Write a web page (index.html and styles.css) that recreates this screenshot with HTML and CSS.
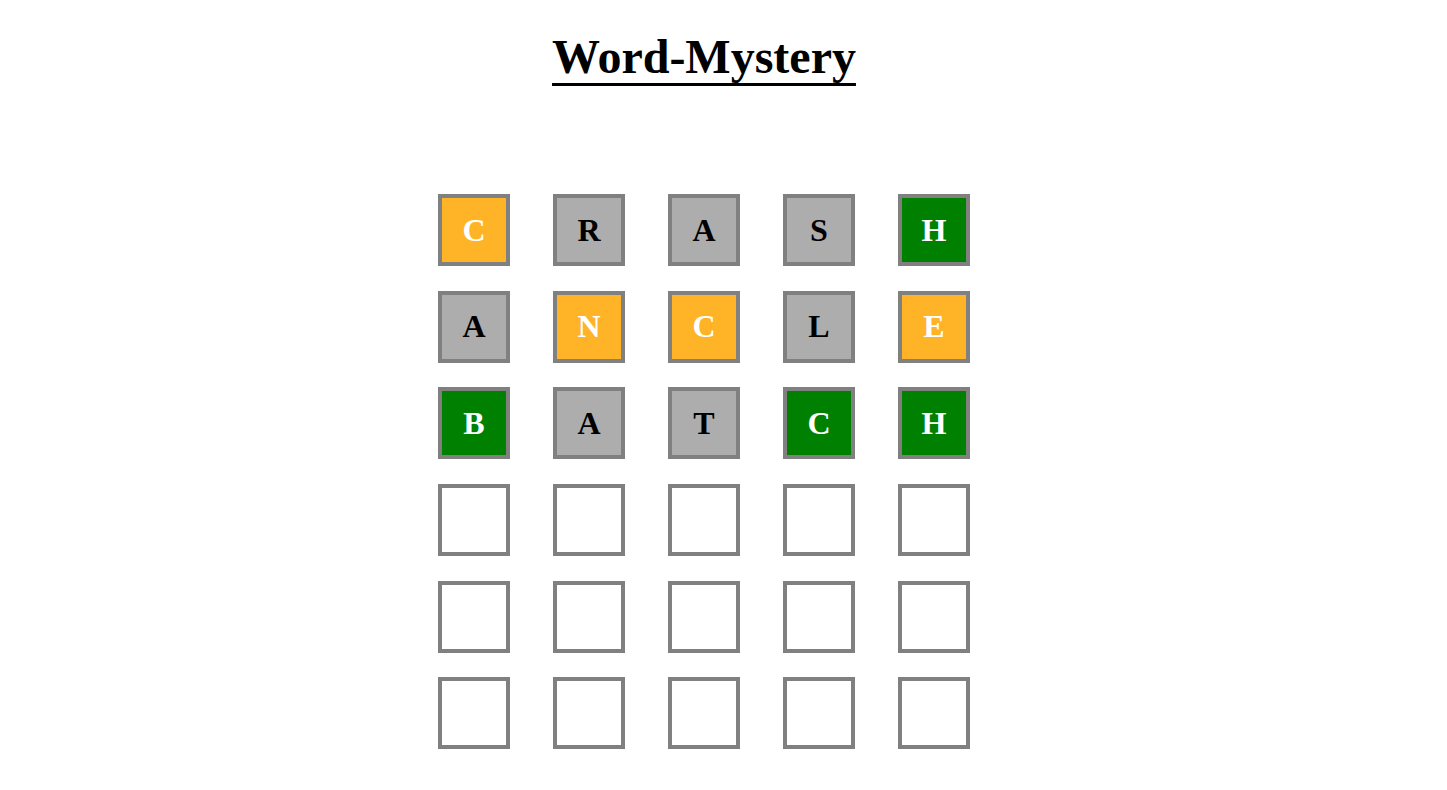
FILE: index.html
```html
<!DOCTYPE html>
<html>
<head>
<meta charset="utf-8">
<title>Word-Mystery</title>
<link rel="stylesheet" href="styles.css">
</head>
<body>
<div class="page">
  <h1 class="title">Word-Mystery</h1>
  <div class="board">
    <div class="tile present">C</div>
    <div class="tile absent">R</div>
    <div class="tile absent">A</div>
    <div class="tile absent">S</div>
    <div class="tile correct">H</div>

    <div class="tile absent">A</div>
    <div class="tile present">N</div>
    <div class="tile present">C</div>
    <div class="tile absent">L</div>
    <div class="tile present">E</div>

    <div class="tile correct">B</div>
    <div class="tile absent">A</div>
    <div class="tile absent">T</div>
    <div class="tile correct">C</div>
    <div class="tile correct">H</div>

    <div class="tile"></div><div class="tile"></div><div class="tile"></div><div class="tile"></div><div class="tile"></div>
    <div class="tile"></div><div class="tile"></div><div class="tile"></div><div class="tile"></div><div class="tile"></div>
    <div class="tile"></div><div class="tile"></div><div class="tile"></div><div class="tile"></div><div class="tile"></div>
  </div>
</div>
</body>
</html>
```
FILE: styles.css
```css
html, body {
  margin: 0;
  padding: 0;
  background: #ffffff;
}
body {
  font-family: "Liberation Serif", "Times New Roman", serif;
  color: #000;
}
.page {
  width: 1392px;
  margin: 0 8px;
  display: flex;
  flex-direction: column;
  align-items: center;
}
.title {
  font-size: 48px;
  font-weight: bold;
  text-decoration: underline;
  text-decoration-thickness: 3px;
  text-underline-offset: 10px;
  text-decoration-skip-ink: none;
  margin: 32.5px 0 0;
  line-height: 48px;
}
.board {
  margin-top: 113.5px;
  display: grid;
  grid-template-columns: repeat(5, 72px);
  grid-auto-rows: 72px;
  column-gap: 43px;
  row-gap: 24.67px;
}
.tile {
  box-sizing: border-box;
  width: 72px;
  height: 72px;
  border: 4px solid #808080;
  background: #ffffff;
  display: flex;
  align-items: center;
  justify-content: center;
  font-size: 32px;
  font-weight: bold;
  color: #000;
}
.tile.absent {
  background: #adadad;
  color: #000;
}
.tile.present {
  background: #ffb327;
  color: #fff;
}
.tile.correct {
  background: #008000;
  color: #fff;
}
```
